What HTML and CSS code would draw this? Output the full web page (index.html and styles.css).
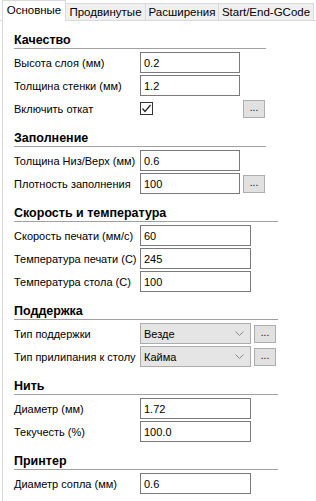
FILE: index.html
```html
<!DOCTYPE html>
<html lang="ru">
<head>
  <meta charset="UTF-8" />
  <title>Настройки печати</title>
  <link rel="stylesheet" href="styles.css">
</head>
<body>
<div class="tabs">
  <div class="tab active">Основные</div>
  <div class="tab tab-adv">Продвинутые</div>
  <div class="tab tab-ext">Расширения</div>
  <div class="tab tab-gcode">Start/End-GCode</div>
</div>
<div class="panel">
  <section class="group narrow">
    <h3>Качество</h3>
    <div class="grid">
      <label>Высота слоя (мм)</label><input type="text" value="0.2"/><span></span>
      <label>Толщина стенки (мм)</label><input type="text" value="1.2"/><span></span>
      <label>Включить откат</label>
      <div class="cell"><span class="check"><svg width="11" height="11" viewBox="0 0 11 11"><polyline points="1.5,5.5 4,8.5 9.5,2" fill="none" stroke="#222" stroke-width="1.2"/></svg></span></div>
      <div class="more">...</div>
    </div>
  </section>

  <section class="group narrow">
    <h3>Заполнение</h3>
    <div class="grid">
      <label>Толщина Низ/Верх (мм)</label><input type="text" value="0.6"/><span></span>
      <label>Плотность заполнения</label><input type="text" value="100"/><div class="more">...</div>
    </div>
  </section>

  <section class="group">
    <h3>Скорость и температура</h3>
    <div class="grid">
      <label>Скорость печати (мм/с)</label><input type="text" value="60"/><span></span>
      <label>Температура печати (С)</label><input type="text" value="245"/><span></span>
      <label>Температура стола (С)</label><input type="text" value="100"/><span></span>
    </div>
  </section>

  <section class="group">
    <h3>Поддержка</h3>
    <div class="grid">
      <label>Тип поддержки</label>
      <div class="select">Везде<svg width="9" height="5" viewBox="0 0 9 5"><polyline points="0.5,0.5 4.5,4.5 8.5,0.5" fill="none" stroke="#888" stroke-width="1"/></svg></div>
      <div class="more">...</div>
      <label>Тип прилипания к столу</label>
      <div class="select">Кайма<svg width="9" height="5" viewBox="0 0 9 5"><polyline points="0.5,0.5 4.5,4.5 8.5,0.5" fill="none" stroke="#888" stroke-width="1"/></svg></div>
      <div class="more">...</div>
    </div>
  </section>

  <section class="group">
    <h3>Нить</h3>
    <div class="grid">
      <label>Диаметр (мм)</label><input type="text" value="1.72"/><span></span>
      <label>Текучесть (%)</label><input type="text" value="100.0"/><span></span>
    </div>
  </section>

  <section class="group">
    <h3>Принтер</h3>
    <div class="grid">
      <label>Диаметр сопла (мм)</label><input type="text" value="0.6"/><span></span>
    </div>
  </section>
</div>
</body>
</html>
```

FILE: styles.css
```css
* { box-sizing: border-box; margin: 0; padding: 0; }
html, body { height: 100%; }
body {
  font-family: "Liberation Sans", Arial, sans-serif;
  font-size: 11px;
  color: #000;
  background: #fff;
  overflow: hidden;
}

.tabs {
  display: flex;
  align-items: flex-end;
  height: 21px;
  padding-left: 2px;
  border-bottom: 1px solid #d9d9d9;
}

.tab {
  height: 17px;
  font-size: 11.5px;
  line-height: 16px;
  text-align: center;
  background: #f0f0f0;
  border-top: 1px solid #d9d9d9;
  border-right: 1px solid #d9d9d9;
  white-space: nowrap;
  overflow: hidden;
}

.tab.active {
  width: 64px;
  height: 21px;
  margin-bottom: -1px;
  line-height: 19px;
  background: #fff;
  border-left: 1px solid #d9d9d9;
}

.tab-adv { width: 80px; }
.tab-ext { width: 73px; }
.tab-gcode { width: 95px; }

.panel {
  height: calc(100% - 21px);
  margin-left: 2px;
  padding: 11px 0 0 11px;
  border-left: 1px solid #d9d9d9;
}

.group {
  width: 264px;
  margin-bottom: 11px;
}

.group.narrow {
  width: 252px;
}

.group h3 {
  height: 17px;
  font-size: 12.5px;
  line-height: 16px;
  font-weight: bold;
  border-bottom: 1px solid #a0a0a0;
  margin-bottom: 3px;
}

.grid {
  display: grid;
  grid-template-columns: 126px 111px 26px;
  grid-auto-rows: 21px;
  row-gap: 2px;
  align-items: center;
}

.narrow .grid {
  grid-template-columns: 126px 100px 26px;
}

.grid label {
  white-space: nowrap;
}

.grid input {
  height: 21px;
  width: 100%;
  padding: 0 3px;
  font: inherit;
  color: #000;
  border: 1px solid #7a7a7a;
  background: #fff;
  outline: none;
}

.cell {
  display: flex;
  align-items: center;
}

.check {
  display: flex;
  align-items: center;
  justify-content: center;
  width: 13px;
  height: 13px;
  border: 1px solid #333;
  background: #fff;
}

.select {
  display: flex;
  align-items: center;
  justify-content: space-between;
  height: 21px;
  padding: 0 6px 0 3px;
  background: #e5e5e5;
  border: 1px solid #adadad;
}

.more {
  justify-self: end;
  width: 22px;
  height: 18px;
  margin-right: 1px;
  font-size: 10px;
  line-height: 14px;
  text-align: center;
  background: #e1e1e1;
  border: 1px solid #adadad;
}
```
